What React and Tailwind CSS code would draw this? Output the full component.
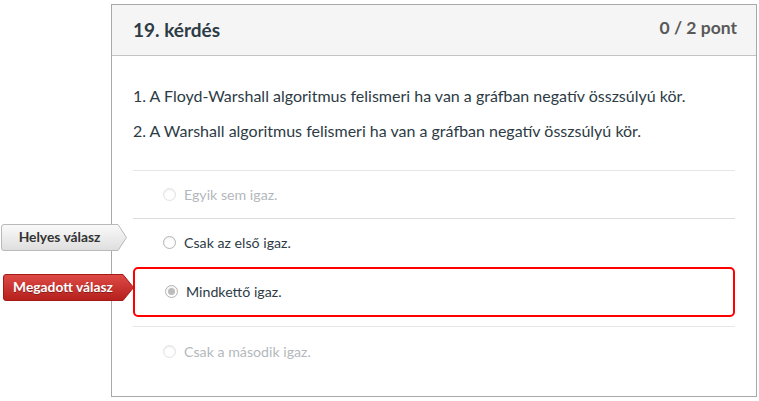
import React from 'react';

const font = { fontFamily: 'Lato, "Noto Sans", sans-serif' };

function Tag({ text, x, y, w, h, tip, variant }) {
  const red = variant === 'red';
  const id = red ? 'gRed' : 'gGray';
  return (
    <div className="absolute flex items-center" style={{ left: x, top: y, width: w, height: h }}>
      <svg className="absolute inset-0" width={w} height={h} viewBox={`0 0 ${w} ${h}`}>
        <defs>
          <linearGradient id={id} x1="0" y1="0" x2="0" y2="1">
            {red ? (
              <>
                <stop offset="0" stopColor="#de4a45" />
                <stop offset="1" stopColor="#b5201c" />
              </>
            ) : (
              <>
                <stop offset="0" stopColor="#fafafa" />
                <stop offset="1" stopColor="#dedede" />
              </>
            )}
          </linearGradient>
        </defs>
        <path
          d={`M3 0.5 H${w - tip} L${w - 0.5} ${h / 2} L${w - tip} ${h - 0.5} H3 Q0.5 ${h - 0.5} 0.5 ${h - 3} V3 Q0.5 0.5 3 0.5 Z`}
          fill={`url(#${id})`}
          stroke={red ? '#a31a17' : '#b9b9b9'}
          strokeWidth="1"
        />
      </svg>
      <span
        className={`relative text-center text-[13.8px] font-bold ${red ? 'text-white' : 'text-[#333]'}`}
        style={{ width: w - tip, ...(red ? { textShadow: '0 1px 0 rgba(0,0,0,0.35)' } : {}) }}
      >
        {text}
      </span>
    </div>
  );
}

function Radio({ checked, faded }) {
  return (
    <span
      className={`w-[13px] h-[13px] rounded-full border flex items-center justify-center bg-white ${
        faded ? 'border-[#e2e2e2]' : 'border-[#b4b4b4]'
      }`}
      style={{ boxShadow: 'inset 0 1px 2px rgba(0,0,0,0.08)' }}
    >
      {checked && <span className="w-[7px] h-[7px] rounded-full bg-[#bcbcbc]" />}
    </span>
  );
}

function Option({ label, faded, checked }) {
  return (
    <div className="flex items-center gap-[8px] pl-[30px]">
      <Radio checked={checked} faded={faded} />
      <span className={`text-[14.2px] ${faded ? 'text-[#b3b8bc]' : 'text-[#2d3b45]'}`}>{label}</span>
    </div>
  );
}

export default function App() {
  return (
    <div className="relative w-[759px] h-[401px] bg-white" style={font}>
      <div className="pl-[111px] pt-[4px]">
        <div className="w-[646px] h-[393px] border border-[#a9a9a9] bg-white">
          <div className="h-[51px] bg-[#f5f5f5] border-b border-[#c4c4c4] flex items-center justify-between pl-[21px] pr-[19px]">
            <h2 className="text-[19px] font-bold text-[#2d3b45] pt-[1px]">19. kérdés</h2>
            <span className="text-[17.5px] font-bold text-[#595959] pb-[4px]">0 / 2 pont</span>
          </div>
          <div className="px-[21px] text-[#2d3b45]">
            <p className="text-[16px] pt-[29px] leading-[22px]">
              1. A Floyd-Warshall algoritmus felismeri ha van a gráfban negatív összsúlyú kör.
            </p>
            <p className="text-[16px] pt-[13px] leading-[22px]">
              2. A Warshall algoritmus felismeri ha van a gráfban negatív összsúlyú kör.
            </p>
            <div className="mt-[28px] border-t border-[#e6e6e6] h-[48px] flex items-center">
              <Option label="Egyik sem igaz." faded />
            </div>
            <div className="border-t border-[#dcdcdc] h-[49px] flex items-center">
              <Option label="Csak az első igaz." />
            </div>
            <div className="h-[50px] border-2 border-[#ff0000] rounded-[5px] flex items-center">
              <Option label="Mindkettő igaz." checked />
            </div>
            <div className="mt-[9px] border-t border-[#e6e6e6] h-[50px] flex items-center">
              <Option label="Csak a második igaz." faded />
            </div>
          </div>
        </div>
      </div>
      <Tag text="Helyes válasz" x={1} y={224} w={126} h={27} tip={9} variant="gray" />
      <Tag text="Megadott válasz" x={3} y={274} w={131} h={27} tip={11} variant="red" />
    </div>
  );
}
